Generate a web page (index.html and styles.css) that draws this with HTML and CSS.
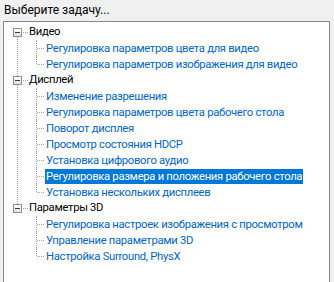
FILE: index.html
```html
<!DOCTYPE html>
<html lang="ru">
<head>
<meta charset="utf-8">
<link rel="stylesheet" href="styles.css">
</head>
<body>
<div class="title">Выберите задачу...</div>
<div class="tree">
  <ul class="roots">
    <li class="node">
      <div class="prow"><span class="box"></span><span class="plabel">Видео</span></div>
      <ul class="kids">
        <li class="kid"><span class="klabel">Регулировка параметров цвета для видео</span></li>
        <li class="kid"><span class="klabel">Регулировка параметров изображения для видео</span></li>
      </ul>
    </li>
    <li class="node">
      <div class="prow"><span class="box"></span><span class="plabel">Дисплей</span></div>
      <ul class="kids">
        <li class="kid"><span class="klabel">Изменение разрешения</span></li>
        <li class="kid"><span class="klabel">Регулировка параметров цвета рабочего стола</span></li>
        <li class="kid"><span class="klabel">Поворот дисплея</span></li>
        <li class="kid"><span class="klabel">Просмотр состояния HDCP</span></li>
        <li class="kid"><span class="klabel">Установка цифрового аудио</span></li>
        <li class="kid"><span class="klabel selected">Регулировка размера и положения рабочего стола</span></li>
        <li class="kid"><span class="klabel">Установка нескольких дисплеев</span></li>
      </ul>
    </li>
    <li class="node last">
      <div class="prow"><span class="box"></span><span class="plabel">Параметры 3D</span></div>
      <ul class="kids">
        <li class="kid"><span class="klabel">Регулировка настроек изображения с просмотром</span></li>
        <li class="kid"><span class="klabel">Управление параметрами 3D</span></li>
        <li class="kid"><span class="klabel">Настройка Surround, PhysX</span></li>
      </ul>
    </li>
  </ul>
</div>
</body>
</html>
```
FILE: styles.css
```css
html, body {
  margin: 0;
  padding: 0;
  background: #f0f0f0;
  font-family: Roboto, "Liberation Sans", Arial, sans-serif;
  font-size: 11.25px;
  letter-spacing: -0.3px;
  color: #000;
  overflow: hidden;
  white-space: nowrap;
}
.title {
  height: 21px;
  line-height: 21px;
  padding-left: 4px;
  font-size: 12px;
  letter-spacing: 0;
}
.tree {
  margin-left: 3px;
  width: 325px;
  height: 300px;
  border: 1px solid #828790;
  background: #fff;
  padding-top: 2px;
  box-sizing: content-box;
}
ul {
  list-style: none;
  margin: 0;
  padding: 0;
}
.node {
  position: relative;
}
.node::before {
  content: "";
  position: absolute;
  left: 13px;
  top: 13px;
  bottom: -4px;
  border-left: 1px dotted #a0a0a0;
}
.node.last::before {
  display: none;
}
.prow {
  height: 16px;
  display: flex;
  align-items: center;
  position: relative;
}
.box {
  position: relative;
  z-index: 1;
  width: 7px;
  height: 7px;
  margin-left: 9px;
  border: 1px solid #919191;
  background: linear-gradient(#ffffff, #e0e0e0);
}
.box::after {
  content: "";
  position: absolute;
  left: 1px;
  top: 3px;
  width: 5px;
  height: 1px;
  background: #2b3f5c;
}
.plabel {
  margin-left: 7px;
  line-height: 16px;
  position: relative;
}
.plabel::before {
  content: "";
  position: absolute;
  left: -6px;
  top: 8px;
  width: 5px;
  border-top: 1px dotted #a0a0a0;
}
.kids {
  position: relative;
}
.kid {
  height: 16px;
  display: flex;
  align-items: center;
  padding-left: 41px;
  position: relative;
}
.kid::before {
  content: "";
  position: absolute;
  left: 32px;
  top: 0;
  height: 16px;
  border-left: 1px dotted #a0a0a0;
}
.kid:last-child::before {
  height: 8px;
}
.kid::after {
  content: "";
  position: absolute;
  left: 33px;
  top: 8px;
  width: 7px;
  border-top: 1px dotted #a0a0a0;
}
.klabel {
  color: #0066cc;
  line-height: 15px;
  padding: 0 1px;
}
.klabel.selected {
  background: #0078d7;
  color: #fff;
}
```
